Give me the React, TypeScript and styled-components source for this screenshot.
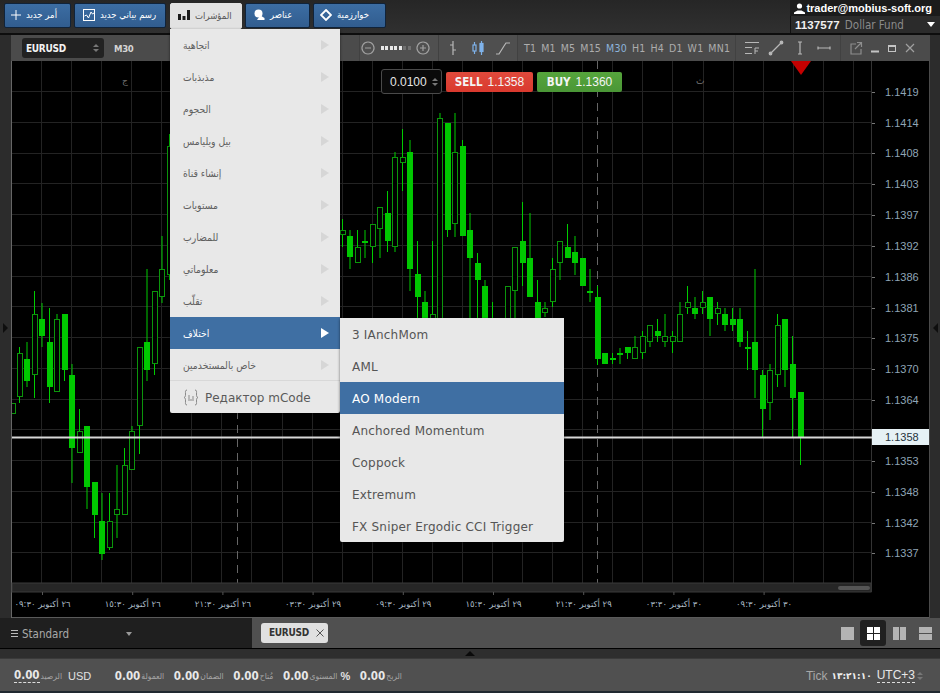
import React from "react";
import styled, { createGlobalStyle } from "styled-components";

const Global = createGlobalStyle`
  html, body { margin: 0; padding: 0; background: #000; }
  body { font-family: "DejaVu Sans Condensed", "DejaVu Sans", sans-serif; }
  * { box-sizing: border-box; }
`;

const FONT = `"DejaVu Sans Condensed", "DejaVu Sans", sans-serif`;

const Page = styled.div`
  position: relative;
  width: 940px;
  height: 693px;
  overflow: hidden;
  display: flex;
  flex-direction: column;
  background: #2a2a2a;
  font-family: ${FONT};
`;

/* top bar */
const TopBar = styled.header`
  height: 35px;
  flex: none;
  display: flex;
  justify-content: space-between;
  background: linear-gradient(#262626, #303030);
  border-bottom: 2px solid #0d0d0d;
`;
const TopButtons = styled.div`
  display: flex;
  gap: 3px;
  padding: 3px 0 0 4px;
`;
const TopButton = styled.div<{ $w: number; $pad: number; $active?: boolean }>`
  width: ${(p) => p.$w}px;
  height: ${(p) => (p.$active ? 26 : 25)}px;
  display: flex;
  align-items: center;
  gap: 5px;
  padding: 0 0 2px ${(p) => p.$pad}px;
  font-size: 9.5px;
  white-space: nowrap;
  border-radius: 2px;
  color: ${(p) => (p.$active ? "#555" : "#fff")};
  border: 1px solid ${(p) => (p.$active ? "#e2e2e2" : "#10233a")};
  background: ${(p) => (p.$active ? "#e2e2e2" : "linear-gradient(#3c6da3, #315d8f)")};
  margin-left: ${(p) => (p.$active ? 1 : 0)}px;
  svg { flex: none; }
`;
const Account = styled.div`
  width: 150px;
  display: flex;
  flex-direction: column;
`;
const AccountMail = styled.div`
  height: 16px;
  display: flex;
  align-items: center;
  justify-content: flex-end;
  gap: 1px;
  padding-right: 8px;
  background: #1b1b1b;
  color: #fff;
  font-family: "Liberation Sans", sans-serif;
  font-size: 11px;
  font-weight: 700;
  white-space: nowrap;
`;
const AccountFund = styled.div`
  flex: 1;
  display: flex;
  align-items: center;
  gap: 5px;
  padding-left: 4px;
  background: #2b2b2b;
  border-left: 1px solid #111;
  color: #8a8a8a;
  font-size: 11.5px;
  b {
    color: #f0f0f0;
    font-family: "Liberation Sans", sans-serif;
    letter-spacing: 0.1px;
  }
`;
const FundArrow = styled.span`
  margin-left: auto;
  margin-right: 5px;
  border-left: 4px solid transparent;
  border-right: 4px solid transparent;
  border-top: 5px solid #fff;
`;

/* workspace */
const Work = styled.div`
  height: 583px;
  flex: none;
  display: flex;
`;
const Gutter = styled.div<{ $right?: boolean }>`
  width: ${(p) => (p.$right ? 10 : 11)}px;
  flex: none;
  display: flex;
  align-items: center;
  justify-content: center;
  background: #2c2c2c;
  padding-top: 3px;
`;
const GutterArrow = styled.span<{ $left?: boolean }>`
  border-top: 5px solid transparent;
  border-bottom: 5px solid transparent;
  ${(p) => (p.$left ? "border-right: 5px solid #0e0e0e;" : "border-left: 5px solid #0e0e0e;")}
`;
const ChartWindow = styled.section`
  width: 919px;
  flex: none;
  display: flex;
  flex-direction: column;
  background: #000;
`;
const ChartToolbar = styled.div`
  height: 26px;
  flex: none;
  display: flex;
  background: #4b4b4b;
  color: #b5b5b5;
`;
const SymbolBox = styled.div`
  width: 82px;
  height: 20px;
  margin: 3px 0 0 11px;
  padding: 0 5px 0 4px;
  display: flex;
  align-items: center;
  justify-content: space-between;
  border-radius: 3px;
  background: #222;
  color: #f2f2f2;
  font-size: 10px;
  letter-spacing: -0.3px;
  font-weight: 700;
`;
const TinyArrows = styled.span`
  display: flex;
  flex-direction: column;
  gap: 2px;
  i {
    display: block;
    border-left: 3px solid transparent;
    border-right: 3px solid transparent;
  }
  i:first-child { border-bottom: 3px solid #777; }
  i:last-child { border-top: 3px solid #777; }
`;
const CurrentFrame = styled.div`
  margin-left: 10px;
  align-self: center;
  font-size: 9.5px;
  letter-spacing: -0.3px;
  font-weight: 700;
  color: #d4d4d4;
`;
const ToolGroup = styled.div<{ $w: number; $shade?: string; $gap?: number; $pad?: string }>`
  width: ${(p) => p.$w}px;
  flex: none;
  display: flex;
  align-items: center;
  gap: ${(p) => p.$gap ?? 0}px;
  padding: ${(p) => p.$pad ?? "0"};
  background: ${(p) => p.$shade ?? "#4b4b4b"};
  border-left: 1px solid #414141;
`;
const Spacer = styled.div`
  flex: 1;
`;
const Frame = styled.span<{ $on?: boolean }>`
  font-size: 10.5px;
  font-weight: 400;
  letter-spacing: 0.2px;
  color: ${(p) => (p.$on ? "#8db4dc" : "#adadad")};
`;
const ZoomDots = styled.div`
  display: flex;
  gap: 1.5px;
`;
const ZoomDot = styled.i<{ $on: boolean }>`
  display: block;
  width: 3px;
  height: 4px;
  background: ${(p) => (p.$on ? "#e8e8e8" : "#707070")};
`;

const PlotWrap = styled.div`
  position: relative;
  flex: 1;
  min-height: 0;
`;
const Plot = styled.svg`
  display: block;
  width: 919px;
  height: 557px;
`;
const PriceText = styled.text`
  font-family: "Liberation Sans", sans-serif;
  font-size: 11px;
  fill: #8fa5b6;
`;
const TagText = styled.text`
  font-family: "Liberation Sans", sans-serif;
  font-size: 11px;
  fill: #24323c;
`;
const DateText = styled.text`
  font-family: "DejaVu Sans", sans-serif;
  font-size: 8.5px;
  fill: #a9b9c4;
  direction: rtl;
`;
const DayText = styled.text`
  font-family: "DejaVu Sans", sans-serif;
  font-size: 9px;
  fill: #777;
`;

/* order widget */
const OrderBar = styled.div`
  position: absolute;
  left: 370px;
  top: 8px;
  display: flex;
  align-items: center;
  gap: 4px;
`;
const Lots = styled.div`
  width: 61px;
  height: 25px;
  padding: 0 3px 0 8px;
  display: flex;
  align-items: center;
  justify-content: space-between;
  border: 1px solid #4a4a4a;
  border-radius: 3px;
  background: #0a0a0a;
  color: #e6e6e6;
  font-family: "Liberation Sans", sans-serif;
  font-size: 12px;
`;
const TradeButton = styled.div<{ $w: number; $bg: string }>`
  width: ${(p) => p.$w}px;
  height: 20px;
  display: flex;
  align-items: center;
  justify-content: center;
  gap: 5px;
  border-radius: 2px;
  background: ${(p) => p.$bg};
  color: #f4f4f4;
  font-family: "Liberation Sans", sans-serif;
  font-size: 12px;
  b { font-family: ${FONT}; font-size: 11.5px; }
`;
const Marker = styled.div`
  position: absolute;
  left: 780px;
  top: 0;
  border-left: 10px solid transparent;
  border-right: 10px solid transparent;
  border-top: 14px solid #c40000;
`;

/* menus */
const Menu = styled.nav`
  position: absolute;
  left: 170px;
  top: 29px;
  width: 170px;
  background: #e8e8e8;
  box-shadow: 0 1px 3px rgba(0, 0, 0, 0.55);
  border-radius: 0 0 2px 2px;
  z-index: 5;
`;
const MenuRow = styled.div<{ $on?: boolean; $rule?: boolean }>`
  height: 32px;
  display: flex;
  align-items: center;
  justify-content: space-between;
  padding: 0 11px 0 13px;
  font-size: 10.3px;
  color: ${(p) => (p.$on ? "#fff" : "#5f5f5f")};
  background: ${(p) => (p.$on ? "#3f6fa3" : "transparent")};
  ${(p) => p.$rule && "border-bottom: 1px solid #d8d8d8;"}
`;
const MenuArrow = styled.span<{ $on?: boolean }>`
  border-top: 5px solid transparent;
  border-bottom: 5px solid transparent;
  border-left: 8px solid ${(p) => (p.$on ? "#fff" : "#d6d6d6")};
`;
const EditorRow = styled.div`
  height: 32px;
  display: flex;
  align-items: center;
  gap: 6px;
  padding: 1px 0 0 13px;
  font-family: "DejaVu Sans", sans-serif;
  font-size: 12px;
  color: #5a5a5a;
`;
const SubMenu = styled.nav`
  position: absolute;
  left: 340px;
  top: 318px;
  width: 224px;
  background: #e8e8e8;
  box-shadow: 0 1px 3px rgba(0, 0, 0, 0.55);
  border-radius: 0 0 2px 2px;
  z-index: 5;
`;
const SubRow = styled.div<{ $on?: boolean }>`
  height: 32px;
  display: flex;
  align-items: center;
  padding: 1px 0 0 12px;
  font-family: "DejaVu Sans", sans-serif;
  font-size: 12px;
  letter-spacing: 0.2px;
  color: ${(p) => (p.$on ? "#fff" : "#555")};
  font-weight: ${(p) => (p.$on ? 500 : 400)};
  background: ${(p) => (p.$on ? "#3f6fa3" : "transparent")};
`;

/* tab bar */
const TabBar = styled.div`
  height: 31px;
  flex: none;
  display: flex;
  border-bottom: 1px solid #000;
`;
const LayoutPicker = styled.div`
  width: 252px;
  flex: none;
  display: flex;
  align-items: center;
  padding: 1px 0 0 11px;
  gap: 4px;
  background: #1f1f1f;
  color: #a9a9a9;
  font-size: 11.5px;
`;
const Burger = styled.span`
  width: 7px;
  height: 7px;
  border-top: 1px solid #bbb;
  border-bottom: 1px solid #bbb;
  position: relative;
  &::after {
    content: "";
    position: absolute;
    left: 0;
    right: 0;
    top: 2px;
    height: 1px;
    background: #bbb;
  }
`;
const PickerArrow = styled.span`
  margin-left: 53px;
  border-left: 3px solid transparent;
  border-right: 3px solid transparent;
  border-top: 4px solid #999;
`;
const TabArea = styled.div`
  flex: 1;
  display: flex;
  align-items: center;
  justify-content: space-between;
  padding: 0 2px 0 9px;
  background: #505050;
`;
const Tab = styled.div`
  width: 67px;
  height: 20px;
  margin-top: -1px;
  display: flex;
  align-items: center;
  gap: 7px;
  padding-left: 8px;
  border-radius: 3px;
  background: #e0e0e0;
  color: #333;
  font-size: 10px;
  letter-spacing: -0.3px;
  font-weight: 700;
`;
const LayoutIcons = styled.div`
  display: flex;
  align-items: center;
`;
const LayoutIcon = styled.div<{ $on?: boolean }>`
  width: 26px;
  height: 26px;
  display: flex;
  align-items: center;
  justify-content: center;
  border-radius: 3px;
  background: ${(p) => (p.$on ? "#202020" : "transparent")};
`;

/* strip + status */
const Strip = styled.div`
  height: 10px;
  flex: none;
  display: flex;
  align-items: center;
  justify-content: center;
  background: #2e2e2e;
  border-bottom: 1px solid #3a3a3a;
`;
const StripArrow = styled.span`
  border-left: 5px solid transparent;
  border-right: 5px solid transparent;
  border-bottom: 5px solid #0a0a0a;
`;
const StatusBar = styled.footer`
  height: 32px;
  flex: none;
  display: flex;
  align-items: center;
  gap: 9.5px;
  padding: 1px 17px 0 14px;
  background: #505050;
  color: #e2e2e2;
`;
const Stat = styled.div<{ $after?: number }>`
  display: flex;
  align-items: center;
  gap: 1px;
  margin-right: ${(p) => p.$after ?? 0}px;
`;
const StatValue = styled.b<{ $dashed?: boolean }>`
  font-family: ${FONT};
  font-size: 11.5px;
  color: #e8e8e8;
  ${(p) => p.$dashed && "border-bottom: 1px dashed #ddd; line-height: 13px;"}
`;
const StatLabel = styled.span`
  font-size: 8.5px;
  color: #a5a5a5;
`;
const StatUnit = styled.span<{ $bold?: boolean }>`
  font-family: "Liberation Sans", sans-serif;
  font-size: 11px;
  font-weight: ${(p) => (p.$bold ? 700 : 400)};
  margin-left: ${(p) => (p.$bold ? 2 : 5)}px;
  color: #e2e2e2;
`;
const Clock = styled.div`
  margin-left: auto;
  display: flex;
  align-items: center;
  gap: 4px;
  font-family: "Liberation Sans", sans-serif;
  font-size: 12px;
  color: #a8a8a8;
`;
const ClockTime = styled.span`
  font-family: "DejaVu Sans", sans-serif;
  font-size: 9px;
  font-weight: 700;
  color: #eee;
`;
const Zone = styled.span`
  margin: 0 -2px 0 1px;
  font-size: 12px;
  color: #e8e8e8;
  border-bottom: 1px dashed #ddd;
  line-height: 14px;
`;
const BottomEdge = styled.div`
  flex: 1;
  background: #202830;
`;

/* data: x, wick top, wick bottom, body top, body bottom, filled */
type C = [number, number, number, number, number, boolean];
const candles: C[] = [
  [12.5, 403, 414, 403, 414, false],
  [19.5, 347, 403, 353, 397, false],
  [27, 342, 387, 359, 381, true],
  [34.5, 291, 398, 314, 375, false],
  [42, 303, 347, 319, 336, true],
  [49.5, 308, 403, 342, 387, true],
  [57, 314, 392, 319, 392, false],
  [64.5, 314, 381, 314, 370, true],
  [72, 364, 483, 375, 448, true],
  [79.5, 409, 453, 431, 453, false],
  [87, 426, 509, 426, 487, true],
  [94.5, 482, 538, 482, 515, true],
  [102, 493, 560, 521, 554, true],
  [109.5, 493, 550, 521, 548, false],
  [117, 465, 538, 509, 515, false],
  [124.5, 448, 515, 465, 515, false],
  [132, 426, 470, 431, 470, false],
  [139.5, 347, 454, 347, 426, false],
  [147, 269, 381, 342, 370, true],
  [154.5, 291, 375, 291, 364, false],
  [162, 236, 303, 269, 297, false],
  [169.5, 134, 280, 146, 275, false],
  [342.5, 219, 247, 230, 235, false],
  [350, 230, 269, 236, 257, true],
  [357.5, 230, 263, 247, 263, false],
  [365, 230, 258, 241, 243, true],
  [372.5, 224, 263, 224, 247, false],
  [380, 207, 258, 207, 229, false],
  [387.5, 191, 252, 213, 241, true],
  [395, 152, 252, 157, 247, false],
  [402.5, 129, 191, 157, 163, false],
  [410, 140, 291, 152, 269, true],
  [417.5, 241, 320, 274, 297, true],
  [425, 291, 320, 302, 320, true],
  [432.5, 241, 320, 314, 322, false],
  [440, 113, 320, 118, 322, false],
  [447.5, 123, 237, 123, 230, true],
  [455, 113, 237, 152, 224, false],
  [462.5, 140, 236, 146, 236, true],
  [470, 213, 320, 230, 258, true],
  [477.5, 253, 320, 263, 280, true],
  [485, 280, 320, 286, 320, true],
  [492.5, 302, 320, 318, 320, true],
  [507.5, 286, 320, 286, 322, false],
  [515, 247, 320, 247, 291, false],
  [522.5, 202, 286, 241, 263, true],
  [530, 213, 297, 258, 297, true],
  [537.5, 280, 320, 302, 320, true],
  [545, 302, 317, 308, 313, false],
  [552.5, 258, 307, 269, 302, false],
  [560, 241, 280, 241, 263, false],
  [567.5, 224, 258, 247, 258, true],
  [575, 236, 275, 252, 263, true],
  [582.5, 258, 286, 258, 286, true],
  [590, 269, 302, 291, 293, true],
  [597.5, 286, 365, 297, 359, true],
  [605, 353, 364, 353, 364, true],
  [612.5, 353, 364, 358, 360, true],
  [620, 348, 364, 353, 355, true],
  [627.5, 347, 359, 347, 353, true],
  [635, 336, 359, 347, 359, false],
  [642.5, 331, 359, 336, 353, false],
  [650, 325, 347, 325, 342, false],
  [657.5, 319, 342, 331, 336, true],
  [665, 314, 347, 336, 342, false],
  [672.5, 331, 353, 336, 342, false],
  [680, 302, 342, 314, 342, false],
  [687.5, 286, 314, 302, 308, false],
  [695, 297, 319, 308, 314, true],
  [702.5, 291, 314, 302, 308, false],
  [710, 297, 336, 297, 319, true],
  [717.5, 302, 325, 308, 314, false],
  [725, 308, 331, 314, 325, true],
  [732.5, 308, 331, 319, 325, true],
  [740, 308, 347, 319, 342, true],
  [747.5, 331, 370, 347, 349, true],
  [755, 269, 398, 342, 370, true],
  [762.5, 370, 437, 375, 409, true],
  [770, 364, 420, 370, 403, false],
  [777.5, 314, 387, 325, 375, false],
  [785, 319, 387, 319, 370, true],
  [792.5, 336, 437, 364, 398, true],
  [800.5, 392, 465, 392, 437, true],
];

const prices: [string, number][] = [
  ["1.1419", 92], ["1.1414", 123], ["1.1408", 153], ["1.1403", 184], ["1.1397", 215],
  ["1.1392", 246], ["1.1386", 277], ["1.1381", 308], ["1.1375", 338], ["1.1370", 369],
  ["1.1364", 400], ["1.1353", 461], ["1.1348", 492], ["1.1342", 523], ["1.1337", 553],
];
const dates = [
  "٢٦ أكتوبر ٠٩:٣٠", "٢٦ أكتوبر ١٥:٣٠", "٢٦ أكتوبر ٢١:٣٠", "٢٩ أكتوبر ٠٣:٣٠", "٢٩ أكتوبر ٠٩:٣٠",
  "٢٩ أكتوبر ١٥:٣٠", "٢٩ أكتوبر ٢١:٣٠", "٣٠ أكتوبر ٠٣:٣٠", "٣٠ أكتوبر ٠٩:٣٠",
];
const menuItems = ["اتجاهية", "مذبذبات", "الحجوم", "بيل ويليامس", "إنشاء قناة", "مستويات", "للمضارب", "معلوماتي", "تقلّب", "اختلاف", "خاص بالمستخدمين"];
const subItems = ["3 IAnchMom", "AML", "AO Modern", "Anchored Momentum", "Coppock", "Extremum", "FX Sniper Ergodic CCI Trigger"];
const frames = ["T1", "M1", "M5", "M15", "M30", "H1", "H4", "D1", "W1", "MN1"];
const stats = ["العمولة", "الضمان", "مُتاح"];

const Grid = () => {
  const v = Array.from({ length: 28 }, (_, i) => Math.round(41 + 30.07 * i) + 0.5);
  const h = Array.from({ length: 16 }, (_, i) => Math.round(92 + 30.75 * i) - 0.5);
  return (
    <g stroke="#232323" strokeWidth="1">
      {v.map((x) => <line key={x} x1={x} x2={x} y1={61} y2={583} />)}
      {h.map((y) => <line key={y} x1={12} x2={871} y1={y} y2={y} />)}
    </g>
  );
};

const Candles = () => (
  <g>
    {candles.map(([x, wt, wb, bt, bb, fill]) => {
      const left = Math.round(x - 3);
      return (
        <g key={x}>
          <line x1={x} x2={x} y1={wt} y2={wb} stroke="#00cc00" strokeWidth="1" />
          {fill ? (
            <rect x={left} y={bt} width={6} height={bb - bt} fill="#00c800" />
          ) : (
            <rect x={left + 0.5} y={bt + 0.5} width={5} height={bb - bt - 1} fill="#000" stroke="#0b960b" />
          )}
        </g>
      );
    })}
  </g>
);

const I = {
  plus: (
    <svg width="10" height="10" viewBox="0 0 10 10"><path d="M5 0v10M0 5h10" stroke="#fff" strokeWidth="1" /></svg>
  ),
  chart: (
    <svg width="12" height="12" viewBox="0 0 12 12" fill="none"><rect x=".5" y=".5" width="11" height="11" stroke="#fff" /><path d="M1.5 7l2-1 2 3 2.5-6 1.5 2 1.5-1" stroke="#fff" /></svg>
  ),
  bars: (
    <svg width="12" height="10" viewBox="0 0 12 10" fill="#1a1a1a"><rect x="0" y="4" width="3" height="6" /><rect x="4.5" y="6" width="3" height="4" /><rect x="9" y="0" width="3" height="10" /></svg>
  ),
  element: (
    <svg width="11" height="11" viewBox="0 0 11 11" fill="#fff"><circle cx="4.5" cy="4.5" r="4" /><path d="M6.5 6.5l4 2.5v2H3l1-1.5z" /></svg>
  ),
  diamond: (
    <svg width="12" height="12" viewBox="0 0 12 12" fill="none"><path d="M6 1l5 5-5 5-5-5z" stroke="#fff" strokeWidth="1.8" /></svg>
  ),
  user: (
    <svg width="11" height="11" viewBox="0 0 11 11" fill="#fff"><circle cx="5.5" cy="3" r="2.6" /><path d="M0 11V9.5l3.5-2h4l3.5 2V11z" /></svg>
  ),
  tabX: (
    <svg width="8" height="8" viewBox="0 0 8 8"><path d="M.5.5l7 7M7.5.5l-7 7" stroke="#555" /></svg>
  ),
  mcode: (
    <svg width="16" height="17" viewBox="0 0 16 17" fill="none" stroke="#8a8a8a"><path d="M4 1C2 1 2.5 3 2.5 5S2.5 8 1 8.5C2.5 9 2.5 10 2.5 12S2 16 4 16M12 1c2 0 1.5 2 1.5 4s0 3 1.5 3.5C13.5 9 13.5 10 13.5 12s.5 4-1.5 4" /><path d="M6 6v6M8 10v2M10 7v5" /></svg>
  ),
};

const ToolIcon = ({ d, w = 16, extra, color = "#b8b8b8" }: { d: string; w?: number; extra?: React.ReactNode; color?: string }) => (
  <svg width={w} height="16" viewBox={`0 0 ${w} 16`} fill="none" stroke={color} strokeWidth="1.2">
    <path d={d} />
    {extra}
  </svg>
);

export default function App() {
  return (
    <Page>
      <Global />
      <TopBar>
        <TopButtons>
          <TopButton $w={67} $pad={6}>{I.plus}<span>أمر جديد</span></TopButton>
          <TopButton $w={92} $pad={8}>{I.chart}<span>رسم بياني جديد</span></TopButton>
          <TopButton $w={72} $pad={7} $active>{I.bars}<span>المؤشرات</span></TopButton>
          <TopButton $w={65} $pad={8}>{I.element}<span>عناصر</span></TopButton>
          <TopButton $w={73} $pad={6}>{I.diamond}<span>خوارزمية</span></TopButton>
        </TopButtons>
        <Account>
          <AccountMail>{I.user}<span>trader@mobius-soft.org</span></AccountMail>
          <AccountFund><b>1137577</b><span>Dollar Fund</span><FundArrow /></AccountFund>
        </Account>
      </TopBar>

      <Work>
        <Gutter><GutterArrow /></Gutter>
        <ChartWindow>
          <ChartToolbar>
            <SymbolBox>EURUSD<TinyArrows><i /><i /></TinyArrows></SymbolBox>
            <CurrentFrame>M30</CurrentFrame>
            <Spacer />
            <ToolGroup $w={79} $shade="#505050" $gap={4.5}>
              <ToolIcon color="#a0a0a0" d="M8 2a6 6 0 1 0 .01 0M5 8h6" />
              <ZoomDots>
                {[1, 1, 1, 1, 1, 0, 0].map((on, i) => <ZoomDot key={i} $on={!!on} />)}
              </ZoomDots>
              <ToolIcon color="#a0a0a0" d="M8 2a6 6 0 1 0 .01 0M5 8h6M8 5v6" />
            </ToolGroup>
            <ToolGroup $w={79} $shade="#4f4f4f" $gap={9} $pad="0 0 0 6px">
              <ToolIcon d="M8 1v14M8 5H5M8 10h3" />
              <svg width="16" height="16" viewBox="0 0 16 16" fill="none" stroke="#7fb2ea" strokeWidth="1.2">
                <path d="M4.5 2v12M11.5 1v14" />
                <rect x="3" y="5" width="3" height="6" fill="#4b4b4b" />
                <rect x="10" y="3.5" width="3" height="8" fill="#7fb2ea" />
              </svg>
              <ToolIcon d="M1 14h3l5-8 2-3h4" />
            </ToolGroup>
            <ToolGroup $w={218} $gap={5} $pad="0 0 0 6px">
              {frames.map((f) => <Frame key={f} $on={f === "M30"}>{f}</Frame>)}
            </ToolGroup>
            <ToolGroup $w={105} $gap={8} $pad="0 0 0 9px">
              <svg width="15" height="16" viewBox="0 0 15 16" fill="none" stroke="#b8b8b8">
                <path d="M0 2.5h14M0 7.5h7M0 13.5h7M10 14V8h4M10 11h3" />
              </svg>
              <ToolIcon d="M2 14L14 2" extra={<><circle cx="2.5" cy="13.5" r="1.3" fill="#b8b8b8" /><circle cx="13.5" cy="2.5" r="1.3" fill="#b8b8b8" /></>} />
              <ToolIcon d="M8 2v12M6 2h4M6 14h4" />
              <ToolIcon d="M2 8h12M2 6.5v3M14 6.5v3" />
            </ToolGroup>
            <ToolGroup $w={90} $gap={4.5} $pad="0 0 0 7px">
              <ToolIcon color="#8e8e8e" d="M8 4H3v10h10V9M7 9l6-6M9 2.5h4.5V7" />
              <svg width="13" height="16" viewBox="0 0 13 16"><rect x="2" y="10.5" width="8" height="2" fill="#c4c4c4" /></svg>
              <svg width="13" height="16" viewBox="0 0 13 16" fill="none" stroke="#c4c4c4"><rect x="2.5" y="5.5" width="7" height="6" strokeWidth="1" /><path d="M2 6h8" strokeWidth="2" /></svg>
              <ToolIcon w={12} color="#a0a0a0" d="M2 4l8 8M10 4l-8 8" />
            </ToolGroup>
          </ChartToolbar>

          <PlotWrap>
            <Plot viewBox="11 61 919 557">
              <Grid />
              <line x1={237.5} x2={237.5} y1={61} y2={583} stroke="#666" strokeDasharray="8 6" />
              <line x1={597.5} x2={597.5} y1={61} y2={583} stroke="#666" strokeDasharray="8 6" />
              <Candles />
              <line x1={11.5} x2={11.5} y1={61} y2={618} stroke="#666" />
              <line x1={871.5} x2={871.5} y1={61} y2={592} stroke="#333" />
              <rect x={12} y={583} width={859} height={9} fill="#262626" stroke="#3a3a3a" strokeWidth="1" />
              <rect x={838} y={586} width={32} height={4} rx={2} fill="#555" />
              <line x1={12} x2={930} y1={617.5} y2={617.5} stroke="#5a5a5a" />
              <line x1={929.5} x2={929.5} y1={61} y2={618} stroke="#4a4a4a" />
              <line x1={12} x2={872} y1={437.5} y2={437.5} stroke="#d8d8d8" strokeWidth="2" />
              <DayText x={122} y={84}>ج</DayText>
              <DayText x={696} y={84}>ث</DayText>
              {prices.map(([p, y]) => (
                <g key={p}>
                  <line x1={872} x2={875} y1={y + 0.5} y2={y + 0.5} stroke="#777" />
                  <PriceText x={885} y={y + 4}>{p}</PriceText>
                </g>
              ))}
              <rect x={872} y={429} width={57} height={16} fill="#e6f1f5" />
              <TagText x={885} y={441}>1.1358</TagText>
              {dates.map((d, i) => {
                const x = 42.5 + 90.2 * i;
                return (
                  <g key={i}>
                    <line x1={x} x2={x} y1={592} y2={595} stroke="#555" />
                    <DateText x={x} y={607} textAnchor="middle">{d}</DateText>
                  </g>
                );
              })}
            </Plot>
            <OrderBar>
              <Lots>0.0100<TinyArrows><i /><i /></TinyArrows></Lots>
              <TradeButton $w={87} $bg="linear-gradient(#e04a3c, #d9392e)"><b>SELL</b>1.1358</TradeButton>
              <TradeButton $w={85} $bg="linear-gradient(#56a53c, #4a9636)"><b>BUY</b>1.1360</TradeButton>
            </OrderBar>
            <Marker />
          </PlotWrap>
        </ChartWindow>
        <Gutter $right><GutterArrow $left /></Gutter>
      </Work>

      <TabBar>
        <LayoutPicker><Burger /><span>Standard</span><PickerArrow /></LayoutPicker>
        <TabArea>
          <Tab>EURUSD{I.tabX}</Tab>
          <LayoutIcons>
            <LayoutIcon>
              <svg width="13" height="13" viewBox="0 0 13 13" fill="#b4b4b4"><rect width="13" height="13" /></svg>
            </LayoutIcon>
            <LayoutIcon $on>
              <svg width="13" height="13" viewBox="0 0 13 13" fill="#fff"><rect width="6" height="6" /><rect x="7" width="6" height="6" /><rect y="7" width="6" height="6" /><rect x="7" y="7" width="6" height="6" /></svg>
            </LayoutIcon>
            <LayoutIcon>
              <svg width="13" height="13" viewBox="0 0 13 13" fill="#b4b4b4"><rect width="6" height="13" /><rect x="7" width="6" height="13" /></svg>
            </LayoutIcon>
            <LayoutIcon>
              <svg width="13" height="13" viewBox="0 0 13 13" fill="#b4b4b4"><rect width="13" height="6" /><rect y="7" width="13" height="6" /></svg>
            </LayoutIcon>
          </LayoutIcons>
        </TabArea>
      </TabBar>
      <Strip><StripArrow /></Strip>
      <StatusBar>
        <Stat $after={14}>
          <StatValue $dashed>0.00</StatValue>
          <StatLabel>الرصيد</StatLabel>
          <StatUnit>USD</StatUnit>
        </Stat>
        {stats.map((l) => (
          <Stat key={l}>
            <StatValue>0.00</StatValue>
            <StatLabel>{l}</StatLabel>
          </Stat>
        ))}
        <Stat>
          <StatValue>0.00</StatValue>
          <StatLabel>المستوى</StatLabel>
          <StatUnit $bold>%</StatUnit>
        </Stat>
        <Stat>
          <StatValue>0.00</StatValue>
          <StatLabel>الربح</StatLabel>
        </Stat>
        <Clock>
          <span>Tick</span>
          <ClockTime>١٣:٢١:١٠</ClockTime>
          <Zone>UTC+3</Zone>
          <TinyArrows><i /><i /></TinyArrows>
        </Clock>
      </StatusBar>
      <BottomEdge />

      <Menu>
        {menuItems.map((m, i) => (
          <MenuRow key={m} $on={i === 9} $rule={i === 10}>
            <span>{m}</span>
            <MenuArrow $on={i === 9} />
          </MenuRow>
        ))}
        <EditorRow>{I.mcode}<span>Редактор mCode</span></EditorRow>
      </Menu>
      <SubMenu>
        {subItems.map((s, i) => <SubRow key={s} $on={i === 2}>{s}</SubRow>)}
      </SubMenu>
    </Page>
  );
}
